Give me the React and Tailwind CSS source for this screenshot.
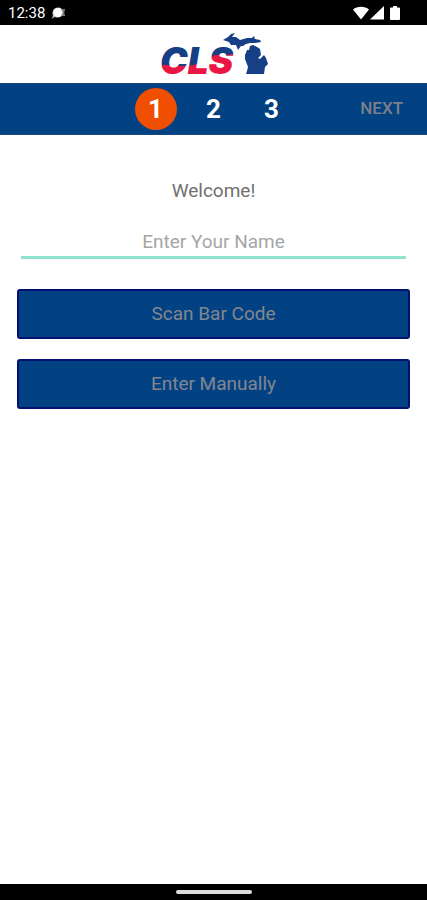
import React, { useState } from 'react';

const steps = [1, 2, 3];

function StatusBar() {
  return (
    <div className="h-[25px] shrink-0 bg-black text-white flex items-center justify-between pl-2 pr-[27px]">
      <div className="flex items-center gap-1">
        <span className="text-[15px] leading-6">12:38</span>
        <svg width="18" height="14" viewBox="0 0 18 14">
          <path d="M9 1.500a5 4.500 0 0 1 0 10c-1.500 0-2.500 0-3.200-.8L2.500 13l1.500-3C2.500 5 5 1.500 9 1.500z" fill="#ccc" />
          <circle cx="9" cy="6.500" r="4.500" fill="#fff" />
          <path d="M12 4h4M13 6.500h2.500M12 9h4" stroke="#999" strokeWidth="1.500" />
        </svg>
      </div>
      <svg width="47" height="14" viewBox="0 0 47 14" fill="#fff">
        <path d="M0 3.500C4 -.3 12 -.3 16 3.500L8 13.500z" />
        <path d="M31 0v13.500H17z" />
        <path d="M40 0h4v1.500h2q1 0 1 1V13q0 1-1 1h-8q-1 0-1-1V2.500q0-1 1-1h2z" />
      </svg>
    </div>
  );
}

function Logo() {
  return (
    <svg width="112" height="58" viewBox="0 -5 112 58" role="img" aria-label="CLS Michigan">
      <defs>
        <pattern id="wave" patternUnits="userSpaceOnUse" width="112" height="54">
          <rect width="112" height="54" fill="#173f86" />
          <path d="M0 36C9 34 14 36 21 36C31 36 38 35 46 32C52 29 54 24 62 25C68 26 72 25 80 22V54H0z" fill="#ea1744" />
        </pattern>
      </defs>
      <text x="2" y="44" fill="url(#wave)" className="text-[37px] leading-none font-black italic font-[Inter,sans-serif]">CLS</text>
      <g fill="#173f86">
        <path d="M65 10L70 7L73 4L77 3L74 7L78 7L82 10L89 8L94 8L96 6L97 9L102 10L103 12L97 13L92 13L88 14L85 16L83 16L80 20L78 15L73 15L71 12z" />
        <path d="M88 44L89 41L90 37L87 29L87 25L89 20L91 20L92 16L95 15L99 17L102 19L103 25L100 28L102 29L106 25L108 28L110 34L107 37L106 44z" />
      </g>
    </svg>
  );
}

function StepBar() {
  return (
    <nav className="h-[52px] shrink-0 bg-[#024283] border-y border-[#1b4580] grid grid-cols-[1fr_auto_1fr] items-center">
      <ol className="col-start-2 flex gap-4">
        {steps.map((step) => (
          <li
            key={step}
            className={
              step === 1
                ? 'size-[42px] rounded-full bg-[#f04e00] text-white text-[26px] font-bold flex items-center justify-center'
                : 'size-[42px] text-white text-[26px] font-bold flex items-center justify-center'
            }
          >
            {step}
          </li>
        ))}
      </ol>
      <button type="button" className="justify-self-end mr-6 text-[17px] font-medium text-[#7c8088]">NEXT</button>
    </nav>
  );
}

function ActionButton({ children }) {
  return (
    <button type="button" className="h-[50px] w-full rounded-[3px] border-2 border-[#02106f] bg-[#024283] text-[19px] text-[#83868f]">
      {children}
    </button>
  );
}

export default function App() {
  const [name, setName] = useState('');

  return (
    <div className="min-h-screen flex flex-col bg-white font-[Roboto,sans-serif]">
      <StatusBar />
      <header className="h-[58px] shrink-0 flex items-center justify-center">
        <Logo />
      </header>
      <StepBar />
      <main className="flex-1 px-[17px] pt-11 flex flex-col">
        <label htmlFor="name" className="text-center text-[19px] leading-6 text-[#707070]">Welcome!</label>
        <input
          id="name"
          type="text"
          value={name}
          onChange={(e) => setName(e.target.value)}
          placeholder="Enter Your Name"
          className="mx-1 mt-6 h-8 border-b-3 border-[#8fe3d0] text-center text-[19px] text-[#707070] placeholder:text-[#a6a6a6] outline-none"
        />
        <div className="mt-[30px] flex flex-col gap-5">
          <ActionButton>Scan Bar Code</ActionButton>
          <ActionButton>Enter Manually</ActionButton>
        </div>
      </main>
      <div className="h-4 shrink-0 bg-black flex items-center justify-center">
        <div className="w-19 h-1 rounded-full bg-[#ddd]" />
      </div>
    </div>
  );
}
